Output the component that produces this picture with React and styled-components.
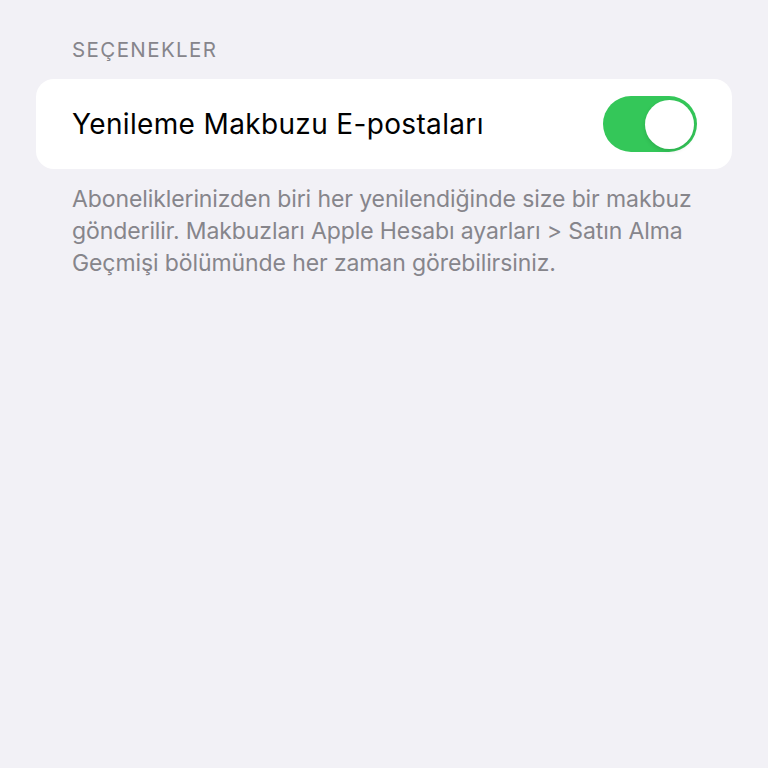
import React, { useState } from "react";
import styled, { createGlobalStyle } from "styled-components";

const Global = createGlobalStyle`
  html, body { margin: 0; padding: 0; background: #f2f1f6; }
  body { font-family: Inter, "Noto Sans", sans-serif; -webkit-font-smoothing: antialiased; }
`;

const Page = styled.div`
  width: 768px;
  height: 768px;
  background: #f2f1f6;
  padding: 38px 36px 0;
  box-sizing: border-box;
`;

const SectionHeader = styled.div`
  padding-left: 36px;
  font-size: 20.5px;
  line-height: 24px;
  color: #86858b;
  letter-spacing: 1.4px;
  margin-bottom: 17px;
`;

const Card = styled.div`
  background: #ffffff;
  border-radius: 18px;
  height: 90px;
  display: flex;
  align-items: center;
  justify-content: space-between;
  padding: 0 35px 0 36px;
`;

const RowTitle = styled.div`
  font-size: 28px;
  color: #000;
  letter-spacing: 0.35px;
`;

const Switch = styled.button`
  width: 94px;
  height: 56px;
  border: none;
  border-radius: 28px;
  background: ${(p) => (p.$on ? "#34c759" : "#e5e5ea")};
  padding: 3px;
  display: flex;
  justify-content: ${(p) => (p.$on ? "flex-end" : "flex-start")};
  align-items: center;
  cursor: pointer;
`;

const Knob = styled.span`
  width: 49px;
  height: 49px;
  border-radius: 50%;
  background: #fff;
  box-shadow: 0 2px 4px rgba(0, 0, 0, 0.12);
`;

const Footer = styled.p`
  margin: 14px 0 0;
  padding: 0 36px;
  font-size: 23px;
  line-height: 32px;
  color: #86858b;
  letter-spacing: -0.1px;
`;

export default function App() {
  const [on, setOn] = useState(true);
  return (
    <Page>
      <Global />
      <SectionHeader>SEÇENEKLER</SectionHeader>
      <Card>
        <RowTitle>Yenileme Makbuzu E-postaları</RowTitle>
        <Switch $on={on} onClick={() => setOn(!on)} aria-label="toggle">
          <Knob />
        </Switch>
      </Card>
      <Footer>
        Aboneliklerinizden biri her yenilendiğinde size bir makbuz gönderilir. Makbuzları Apple Hesabı ayarları &gt; Satın Alma Geçmişi bölümünde her zaman görebilirsiniz.
      </Footer>
    </Page>
  );
}
